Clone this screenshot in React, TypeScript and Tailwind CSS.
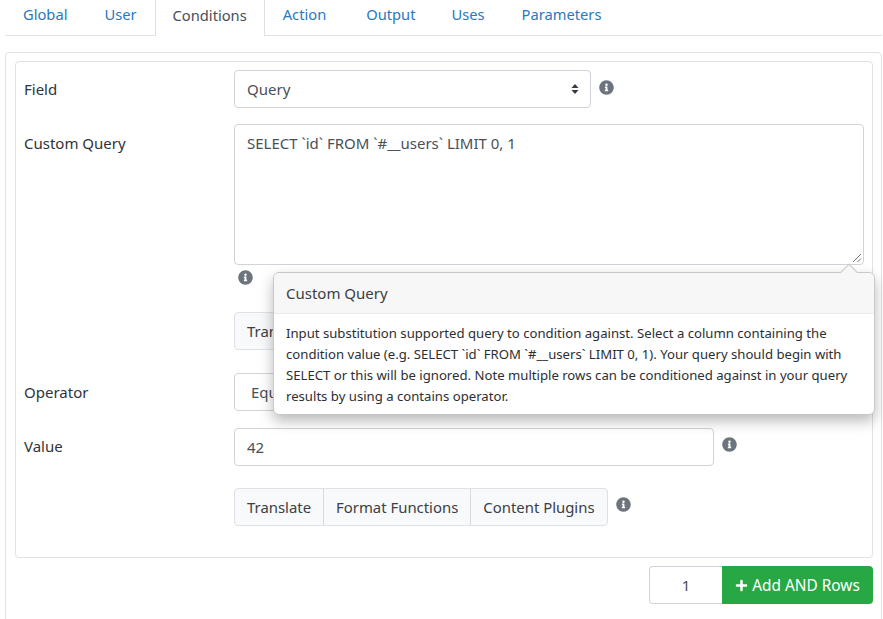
import { FaInfoCircle, FaPlus } from 'react-icons/fa';

const tabs = [
  { label: 'Global', pad: 'pl-[18px] pr-[19px]' },
  { label: 'User', pad: 'px-[18px]' },
  { label: 'Conditions', pad: 'px-[17px]', active: true },
  { label: 'Action', pad: 'pl-[18px] pr-[22px]' },
  { label: 'Output', pad: 'px-[18px]' },
  { label: 'Uses', pad: 'pl-[18px] pr-[19px]' },
  { label: 'Parameters', pad: 'px-[18px]' },
];
const fieldClass = 'h-[38px] shrink-0 rounded border border-[#ced4da] bg-white flex items-center text-[#495057]';

function Info({ className = '' }: { className?: string }) {
  return <FaInfoCircle className={`text-[15px] text-[#6c757d] shrink-0 ${className}`} />;
}

function SelectArrows() {
  return (
    <svg width="8" height="12" viewBox="0 0 8 12" className="ml-auto mr-[-1px]">
      <path d="M4 1 L7.5 5 H0.5 Z M4 11 L7.5 7 H0.5 Z" fill="#343a40" />
    </svg>
  );
}

function ButtonGroup({ className = '' }: { className?: string }) {
  return (
    <div className={`flex h-[38px] w-fit shrink-0 rounded border border-[#dee2e6] bg-[#f8f9fa] text-[14.9px] text-[#3a4046] ${className}`}>
      <span className="flex items-center px-3">Translate</span>
      <span className="flex items-center border-l border-[#d8dcdf] px-3">Format Functions</span>
      <span className="flex items-center border-l border-[#d8dcdf] px-3">Content Plugins</span>
    </div>
  );
}

export default function App() {
  return (
    <div className="relative h-[619px] w-[883px] overflow-hidden bg-white font-['Noto_Sans',sans-serif] text-[15px] text-[#2f3439]">
      <div className="ml-[5px] mr-px -mt-[6px] flex h-[42px] border-b border-[#dee2e6] text-[14.7px]">
        {tabs.map((tab) =>
          tab.active ? (
            <span
              key={tab.label}
              className={`flex h-[42px] items-center rounded-t border border-b-0 border-[#dee2e6] bg-white text-[#495057] ${tab.pad}`}
            >
              {tab.label}
            </span>
          ) : (
            <span key={tab.label} className={`flex h-[41px] items-center text-[#2a78bd] ${tab.pad}`}>
              {tab.label}
            </span>
          ),
        )}
      </div>

      <div className="ml-[5px] mr-px mt-[16px] h-[700px] rounded border border-[#e2e2e2] pl-[9px] pr-[8px] pt-[8px]">
        <div className="h-[497px] rounded border border-[#e2e2e2] px-[8px] pt-[8px]">
          <div className="flex">
            <div className="flex h-[38px] w-[210px] shrink-0 items-center">Field</div>
            <div className={`${fieldClass} w-[357px] px-3`}>
              Query
              <SelectArrows />
            </div>
            <Info className="ml-[8px] mt-[10px]" />
          </div>

          <div className="mt-[16px] flex">
            <div className="w-[210px] shrink-0 pt-[8px]">Custom Query</div>
            <div className="w-[630px] shrink-0">
              <div className="relative h-[141px] rounded border border-[#ced4da] px-3 pt-[7px] text-[#495057]">
                SELECT `id` FROM `#__users` LIMIT 0, 1
                <svg width="10" height="10" viewBox="0 0 10 10" className="absolute bottom-[1px] right-[1px]">
                  <path d="M1 9 L9 1 M5.5 9 L9 5.5" stroke="#777" strokeWidth="1" />
                </svg>
              </div>
              <Info className="ml-[4px] mt-[5px]" />
              <ButtonGroup className="mt-[27px]" />
            </div>
          </div>

          <div className="mt-[23px] flex">
            <div className="flex h-[38px] w-[210px] shrink-0 items-center">Operator</div>
            <div className={`${fieldClass} w-[357px] pl-4`}>Equals</div>
          </div>

          <div className="mt-[17px] flex">
            <div className="flex h-[38px] w-[210px] shrink-0 items-center pb-[2px]">Value</div>
            <div className={`${fieldClass} w-[480px] px-3`}>42</div>
            <Info className="ml-[8px] mt-[9px]" />
          </div>

          <div className="mt-[22px] flex pl-[210px]">
            <ButtonGroup />
            <Info className="ml-[8px] mt-[9px]" />
          </div>
        </div>

        <div className="mt-[8px] flex justify-end">
          <div className="flex h-[38px] w-[73px] items-center justify-center rounded-l border border-r-0 border-[#ced4da] text-[#495057]">
            1
          </div>
          <div className="flex h-[38px] w-[151px] items-center justify-center gap-[4px] rounded-r bg-[#28a745] pt-px text-[15.4px] text-white">
            <FaPlus className="text-[13px]" />
            Add AND Rows
          </div>
        </div>
      </div>

      {/* popover for the Custom Query help icon */}
      <div className="absolute left-[273px] top-[272px] h-[143px] w-[602px] rounded-md border border-[#c9c9c9] bg-white shadow-[0_6px_14px_rgba(0,0,0,0.28)]">
        <div className="absolute -top-[7px] right-[19px] h-[12px] w-[12px] rotate-45 border-l border-t border-[#c9c9c9] bg-[#f7f7f7]" />
        <div className="relative rounded-t-md border-b border-[#ebebeb] bg-[#f7f7f7] px-3 py-[9px] text-[15px] leading-[22px] text-[#3a4046]">
          Custom Query
        </div>
        <div className="px-3 pb-[8px] pt-[9px] text-[13.15px] leading-[21px] text-[#2b2f33]">
          Input substitution supported query to condition against. Select a column containing the condition value (e.g.
          SELECT `id` FROM `#__users` LIMIT 0, 1). Your query should begin with SELECT or this will be ignored. Note
          multiple rows can be conditioned against in your query results by using a contains operator.
        </div>
      </div>
    </div>
  );
}
